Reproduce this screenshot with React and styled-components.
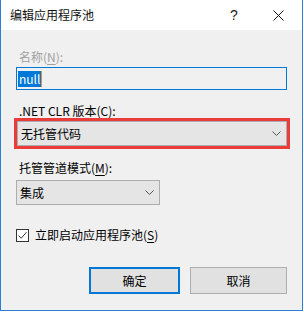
import styled, { createGlobalStyle } from "styled-components";

export default function App() {
  return (
    <>
      <GlobalStyle />
      <Window>
        <TitleBar>
          <Title>编辑应用程序池</Title>
          <TitleButton $w={40}>?</TitleButton>
          <TitleButton $w={48}>
            <svg width="11" height="11" viewBox="0 0 11 11">
              <path d="M0.5 0.5 L10.5 10.5 M10.5 0.5 L0.5 10.5" stroke="#111" strokeWidth="1" />
            </svg>
          </TitleButton>
        </TitleBar>
        <Body>
          <Label $disabled $top={19}>
            名称(<u>N</u>):
          </Label>
          <TextBox>
            <Selected>null</Selected>
            <Caret />
          </TextBox>

          <Label $top={13}>
            .NET CLR 版本(<u>C</u>):
          </Label>
          <Highlight>
            <Combo $width="100%" $height={25}>
              <span>无托管代码</span>
              <Chevron />
            </Combo>
          </Highlight>

          <Label $top={11}>
            托管管道模式(<u>M</u>):
          </Label>
          <Combo $width="144px" $height={25} style={{ marginTop: 5 }}>
            <span>集成</span>
            <Chevron />
          </Combo>

          <CheckRow>
            <CheckBox>
              <svg width="11" height="11" viewBox="0 0 11 11">
                <path d="M1.5 5.5 L4.2 8.2 L9.5 2.2" fill="none" stroke="#333" strokeWidth="1" />
              </svg>
            </CheckBox>
            <span>
              立即启动应用程序池(<u>S</u>)
            </span>
          </CheckRow>

          <ButtonRow>
            <Button $primary $width={91}>确定</Button>
            <Button $width={97}>取消</Button>
          </ButtonRow>
        </Body>
      </Window>
    </>
  );
}

function Chevron() {
  return (
    <ChevronIcon width="9" height="5" viewBox="0 0 9 5">
      <path d="M0.5 0.5 L4.5 4.5 L8.5 0.5" fill="none" stroke="#555" strokeWidth="1" />
    </ChevronIcon>
  );
}

const GlobalStyle = createGlobalStyle`
* {
  margin: 0;
  padding: 0;
  box-sizing: border-box;
}
body {
  background: #ffffff;
  font-family: "Noto Sans CJK SC", "Noto Sans", sans-serif;
  font-size: 12px;
  color: #000;
}
u {
  text-underline-offset: 2px;
}
`;

const Window = styled.div`
  width: 303px;
  height: 311px;
  border: 1px solid #2b7fd4;
  border-top: none;
  display: flex;
  flex-direction: column;
`;

const TitleBar = styled.div`
  height: 30px;
  background: #ffffff;
  display: flex;
  align-items: center;
  padding-left: 9px;
`;

const Title = styled.div`
  flex: 1;
  line-height: 16px;
  color: #111;
`;

const TitleButton = styled.div`
  width: ${(p) => p.$w}px;
  height: 30px;
  display: flex;
  align-items: center;
  justify-content: center;
  font-family: "Liberation Sans", sans-serif;
  font-size: 14px;
  color: #222;
`;

const Body = styled.div`
  flex: 1;
  background: #f0f0f0;
  padding: 0 15px;
  display: flex;
  flex-direction: column;
`;

const Label = styled.div`
  margin-top: ${(p) => p.$top}px;
  padding-left: 3px;
  line-height: 15px;
  height: 15px;
  color: ${(p) => (p.$disabled ? "#a0a0a0" : "#000")};
`;

const TextBox = styled.div`
  margin-top: 3px;
  height: 23px;
  border: 1px solid #0078d7;
  background: #f0f0f0;
  padding: 2px 1px;
  display: flex;
  align-items: center;
`;

const Selected = styled.span`
  background: #0078d7;
  color: #fff;
  line-height: 16px;
  height: 16px;
  padding: 0 1px;
`;

const Caret = styled.span`
  width: 1px;
  height: 16px;
  background: #f08a24;
`;

const Highlight = styled.div`
  margin: 0 -3px 0 -2px;
  border: 3px solid #ec3b3b;
`;

const Combo = styled.div`
  width: ${(p) => p.$width};
  height: ${(p) => p.$height}px;
  border: 1px solid #adadad;
  background: #e5e5e5;
  display: flex;
  align-items: center;
  justify-content: space-between;
  padding: 0 5px 0 3px;
  line-height: 16px;
`;

const ChevronIcon = styled.svg`
  display: block;
`;

const CheckRow = styled.div`
  margin-top: 22px;
  display: flex;
  align-items: center;
  gap: 6px;
  line-height: 16px;
`;

const CheckBox = styled.div`
  width: 13px;
  height: 13px;
  border: 1px solid #333;
  background: #fff;
  display: flex;
  align-items: center;
  justify-content: center;
`;

const ButtonRow = styled.div`
  margin-top: 24px;
  display: flex;
  justify-content: flex-end;
  gap: 10px;
`;

const Button = styled.div`
  width: ${(p) => p.$width}px;
  height: 27px;
  background: #e1e1e1;
  border: ${(p) => (p.$primary ? "2px solid #0078d7" : "1px solid #adadad")};
  display: flex;
  align-items: center;
  justify-content: center;
  line-height: 16px;
`;
